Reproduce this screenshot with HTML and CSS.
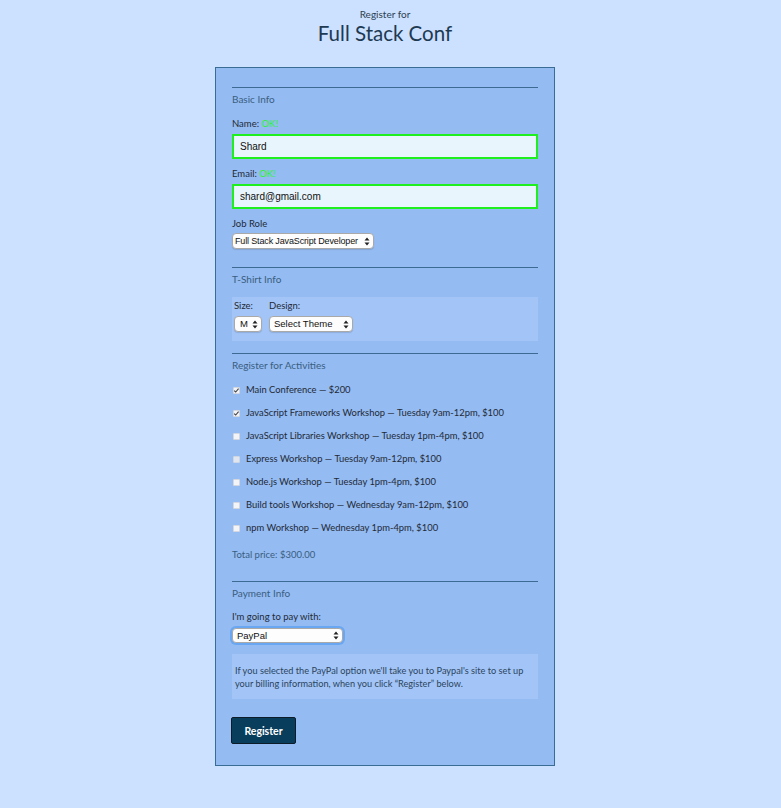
FILE: index.html
```html
<!DOCTYPE html>
<html lang="en">
<head>
<meta charset="utf-8">
<title>Full Stack Conf</title>
<link rel="stylesheet" href="styles.css">
</head>
<body>
<div class="page">
<header class="page-header">
  <span class="kicker">Register for</span>
  <h1 class="title">Full Stack Conf</h1>
</header>
<form class="card">
  <div class="section section-basic">
    <hr class="rule">
    <h2 class="legend">Basic Info</h2>
    <label class="label">Name: <span class="ok">OK!</span></label>
    <input class="text-input" type="text" value="Shard">
    <label class="label">Email: <span class="ok">OK!</span></label>
    <input class="text-input" type="text" value="shard@gmail.com">
    <label class="label">Job Role</label>
    <select class="select select-role"><option>Full Stack JavaScript Developer</option></select>
  </div>

  <div class="section section-shirt">
    <hr class="rule">
    <h2 class="legend">T-Shirt Info</h2>
    <div class="tshirt-box">
      <div class="tshirt-col">
        <label class="label">Size:</label>
        <select class="select select-size"><option>M</option></select>
      </div>
      <div class="tshirt-col">
        <label class="label">Design:</label>
        <select class="select select-design"><option>Select Theme</option></select>
      </div>
    </div>
  </div>

  <div class="section section-activities">
    <hr class="rule">
    <h2 class="legend">Register for Activities</h2>
    <ul class="activities">
      <li class="activity"><input class="check" type="checkbox" checked><span>Main Conference — $200</span></li>
      <li class="activity"><input class="check" type="checkbox" checked><span>JavaScript Frameworks Workshop — Tuesday 9am-12pm, $100</span></li>
      <li class="activity"><input class="check" type="checkbox"><span>JavaScript Libraries Workshop — Tuesday 1pm-4pm, $100</span></li>
      <li class="activity"><input class="check check-dim" type="checkbox"><span>Express Workshop — Tuesday 9am-12pm, $100</span></li>
      <li class="activity"><input class="check" type="checkbox"><span>Node.js Workshop — Tuesday 1pm-4pm, $100</span></li>
      <li class="activity"><input class="check" type="checkbox"><span>Build tools Workshop — Wednesday 9am-12pm, $100</span></li>
      <li class="activity"><input class="check" type="checkbox"><span>npm Workshop — Wednesday 1pm-4pm, $100</span></li>
    </ul>
    <p class="total">Total price: $300.00</p>
  </div>

  <div class="section section-payment">
    <hr class="rule">
    <h2 class="legend">Payment Info</h2>
    <label class="label label-pay">I'm going to pay with:</label>
    <select class="select select-pay"><option>PayPal</option></select>
    <div class="info-box">If you selected the PayPal option we'll take you to Paypal's site to set up your billing information, when you click “Register” below.</div>
  </div>

  <button class="submit" type="button">Register</button>
</form>
</div>
</body>
</html>
```

FILE: styles.css
```css
* { box-sizing: border-box; }

body {
  margin: 0;
  background: #cce0ff;
  font-family: "Lato", "Noto Sans", sans-serif;
  color: #1f2f3f;
}

.page {
  width: 770px;
}

.page-header {
  display: flex;
  flex-direction: column;
  align-items: center;
  padding-top: 8px;
}

.kicker {
  font-size: 10px;
  line-height: 12px;
  color: #2b3f52;
}

.title {
  margin: 0;
  font-size: 20.5px;
  line-height: 26px;
  font-weight: 400;
  color: #1d3a52;
}

.card {
  width: 340px;
  margin: 21px auto 0;
  background: #94bbf2;
  border: 1px solid #3a6d96;
  padding: 19px 16px 21px;
}

.section {
  display: flex;
  flex-direction: column;
  align-items: flex-start;
}

.rule {
  width: 100%;
  margin: 0;
  border: 0;
  border-top: 1px solid #3c6a93;
  height: 0;
}

.legend {
  margin: 5px 0 0;
  font-size: 10px;
  line-height: 13px;
  font-weight: 400;
  color: #3a5e80;
}

.label {
  display: block;
  font-size: 9.5px;
  line-height: 14px;
  color: #1f2a36;
  margin-top: 11px;
}

.ok { color: #2cf52c; }

.text-input {
  width: 100%;
  height: 25px;
  margin-top: 3px;
  border: 2px solid #1fee1f;
  background: #e8f5fc;
  font-family: "Liberation Sans", Arial, sans-serif;
  font-size: 10px;
  padding: 0 6px;
  color: #111;
  outline: none;
}

.text-input + .label { margin-top: 8px; }

.select {
  -webkit-appearance: none;
  appearance: none;
  height: 16px;
  margin-top: 2px;
  border: 1px solid #a9a9a9;
  border-radius: 4px;
  background-color: #fdfdfd;
  background-image: url("data:image/svg+xml;utf8,<svg xmlns='http://www.w3.org/2000/svg' width='6' height='9' viewBox='0 0 6 9'><path d='M0.5 3.5 L3 0.5 L5.5 3.5 Z M0.5 5.5 L3 8.5 L5.5 5.5 Z' fill='%23222'/></svg>");
  background-repeat: no-repeat;
  background-position: right 3px center;
  font-family: "Liberation Sans", Arial, sans-serif;
  font-size: 9.5px;
  line-height: 14px;
  color: #111;
  padding: 0 10px 0 3px;
  box-shadow: 0 1px 1px rgba(0,0,0,0.12);
}

.select-role {
  width: 142px;
  font-size: 9px;
  letter-spacing: -0.15px;
  padding: 0 9px 0 2px;
}

.section-shirt { margin-top: 18px; }
.section-activities { margin-top: 12px; }
.section-payment { margin-top: 19px; }

.tshirt-box {
  width: 100%;
  margin-top: 11px;
  background: #a2c4f6;
  padding: 0 2px 9px;
  display: flex;
  gap: 7px;
}

.tshirt-col {
  display: flex;
  flex-direction: column;
  align-items: flex-start;
}

.tshirt-col .label { margin-top: 2px; }
.tshirt-col .select { margin-top: 3px; }

.select-size { width: 28px; padding-left: 5px; }
.select-design { width: 84px; padding-left: 4px; }

.activities {
  list-style: none;
  margin: 11px 0 0;
  padding: 0;
  display: flex;
  flex-direction: column;
  gap: 9px;
}

.activity {
  display: flex;
  align-items: center;
  font-size: 9.4px;
  line-height: 14px;
  color: #1f2a36;
}

.check {
  -webkit-appearance: none;
  appearance: none;
  width: 7px;
  height: 7px;
  margin: 0 6px 0 1px;
  border: 1px solid #d4d8de;
  border-radius: 1px;
  background: #f2f4f7;
}

.check:checked {
  background-image: url("data:image/svg+xml;utf8,<svg xmlns='http://www.w3.org/2000/svg' width='7' height='7' viewBox='0 0 7 7'><path d='M1.2 3.6 L2.7 5 L5.6 1.6' stroke='%23444' stroke-width='1.1' fill='none'/></svg>");
  background-size: 7px 7px;
  background-position: -1px -1px;
}

.check-dim { background: #dfe6ef; border-color: #cdd6e2; }

.total {
  margin: 13px 0 0;
  font-size: 9.5px;
  line-height: 14px;
  color: #3a5e80;
}

.label-pay { margin-top: 10px; }

.select-pay {
  width: 111px;
  height: 15px;
  margin-top: 4px;
  padding-left: 4px;
  box-shadow: 0 0 0 2px #6aa7f2;
}

.info-box {
  width: 100%;
  margin-top: 11px;
  background: #a2c4f6;
  padding: 10px 4px 9px 3px;
  font-size: 9.2px;
  line-height: 13px;
  color: #2c4560;
}

.submit {
  display: block;
  margin-top: 18px;
  margin-left: -1px;
  width: 65px;
  height: 27px;
  background: #093d5c;
  border: 1px solid #0c1c28;
  border-radius: 2px;
  color: #ffffff;
  font-family: "Lato", "Noto Sans", sans-serif;
  font-weight: 700;
  font-size: 10.5px;
}
```
